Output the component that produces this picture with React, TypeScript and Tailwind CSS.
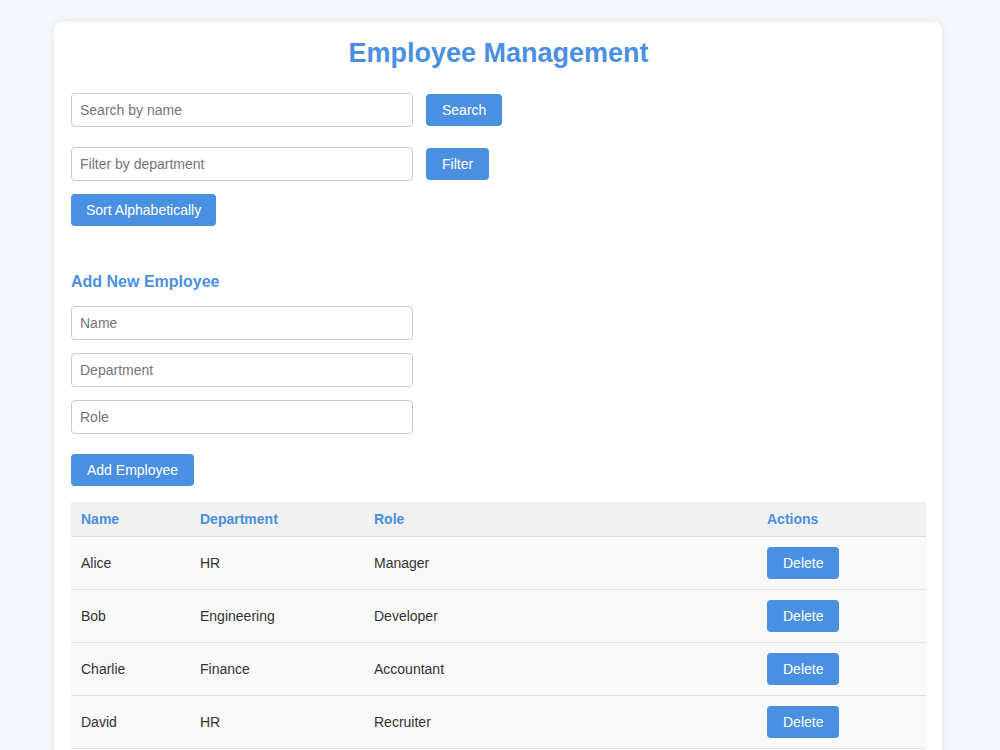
import React, { useState } from 'react';

type Employee = { name: string; department: string; role: string };

const initial: Employee[] = [
  { name: 'Alice', department: 'HR', role: 'Manager' },
  { name: 'Bob', department: 'Engineering', role: 'Developer' },
  { name: 'Charlie', department: 'Finance', role: 'Accountant' },
  { name: 'David', department: 'HR', role: 'Recruiter' },
];

const btn =
  'bg-[#4a90e2] text-white text-[14px] leading-4 px-4 py-2 rounded-[4px] hover:bg-[#357abd]';
const input =
  'w-[40%] h-[34px] px-2 text-[14px] text-[#333] border border-[#ccc] rounded-[4px] placeholder:text-[#757575] outline-none';

const App: React.FC = () => {
  const [employees, setEmployees] = useState<Employee[]>(initial);

  return (
    <div className="min-h-screen bg-[#f4f7fb] pt-[22px] font-['Liberation_Sans',Arial,sans-serif]">
      <div className="w-[888px] ml-[54px] bg-white rounded-lg shadow-[0_0_10px_rgba(0,0,0,0.08)] pl-[17px] pr-4 pt-[15px] pb-8">
        <h1 className="text-center text-[27px] font-bold text-[#4a90e2] leading-8 mb-[24px]">
          Employee Management
        </h1>

        <div className="flex items-center gap-[13px] mb-[20px]">
          <input className={input} placeholder="Search by name" />
          <button className={btn}>Search</button>
        </div>
        <div className="flex items-center gap-[13px] mb-[13px]">
          <input className={`${input} h-[33px]`} placeholder="Filter by department" />
          <button className={btn}>Filter</button>
        </div>
        <button className={`${btn} px-[15px]`}>Sort Alphabetically</button>

        <h3 className="mt-[47px] mb-[15px] text-[16px] font-bold text-[#4a90e2] leading-[18px]">
          Add New Employee
        </h3>
        <div className="flex flex-col gap-[13px]">
          <input className={input} placeholder="Name" />
          <input className={input} placeholder="Department" />
          <input className={input} placeholder="Role" />
        </div>
        <button className={`${btn} mt-5`}>Add Employee</button>

        <table className="w-full mt-[16px] border-collapse text-[14px]">
          <thead>
            <tr className="bg-[#f1f1f1] border-b border-[#ddd]">
              <th className="text-left font-bold text-[#4a90e2] px-[10px] py-[9px] leading-4 w-[119px]">Name</th>
              <th className="text-left font-bold text-[#4a90e2] px-[10px] py-[9px] leading-4 w-[174px]">Department</th>
              <th className="text-left font-bold text-[#4a90e2] px-[10px] py-[9px] leading-4">Role</th>
              <th className="text-left font-bold text-[#4a90e2] px-[10px] py-[9px] leading-4 w-[169px]">Actions</th>
            </tr>
          </thead>
          <tbody>
            {employees.map((e) => (
              <tr key={e.name} className="bg-[#f9f9f9] border-b border-[#e2e2e2] text-[#333]">
                <td className="px-[10px] py-[10px]">{e.name}</td>
                <td className="px-[10px] py-[10px]">{e.department}</td>
                <td className="px-[10px] py-[10px]">{e.role}</td>
                <td className="px-[10px] py-[10px]">
                  <button
                    className={btn}
                    onClick={() => setEmployees(employees.filter((x) => x.name !== e.name))}
                  >
                    Delete
                  </button>
                </td>
              </tr>
            ))}
          </tbody>
        </table>
      </div>
    </div>
  );
};

export default App;
